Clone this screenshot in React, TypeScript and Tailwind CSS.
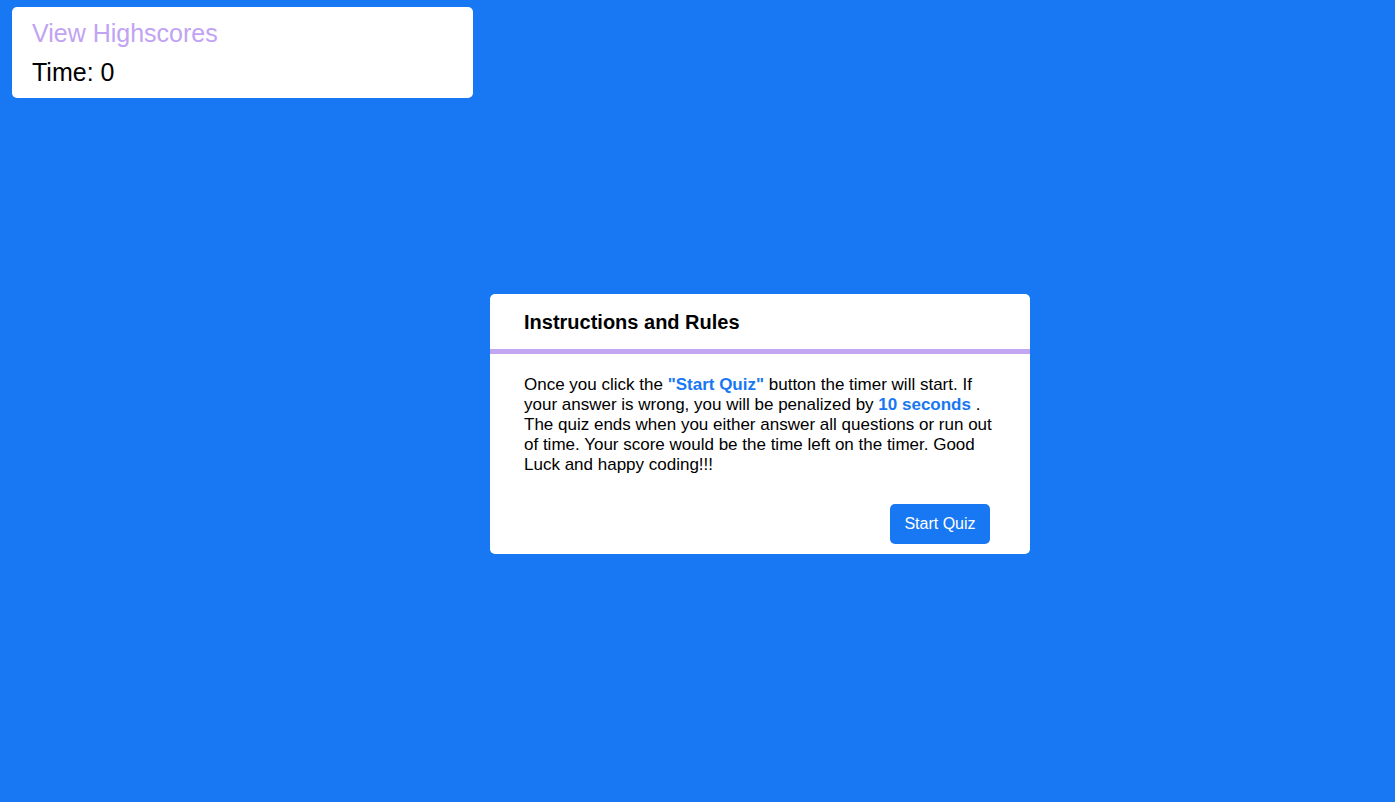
export default function App() {
  return (
    <div className="min-h-[802px] bg-[#1877f2] pt-[7px] font-['Liberation_Sans',Arial,sans-serif]">
      {/* top bar: highscores link + timer */}
      <div className="ml-3 w-[461px] rounded-[5px] bg-white pt-[7px] pb-[6px] pl-5">
        <a href="#" className="block text-[25px] leading-[38px] text-[#c0a3f3]">
          View Highscores
        </a>
        <p className="text-[25px] leading-[40px] text-black">Time: 0</p>
      </div>

      <div className="ml-[490px] mt-[196px] w-[540px] overflow-hidden rounded-[5px] bg-white">
        <div className="flex h-[60px] items-center border-b-[5px] border-[#c3a6f2] px-[34px]">
          <h2 className="text-[20px] font-bold text-black">Instructions and Rules</h2>
        </div>
        <div className="px-[34px] pt-[21px] pb-[10px]">
          <p className="text-[17px] leading-[20px] text-black">
            Once you click the <b className="text-[#1877f2]">"Start Quiz"</b> button the timer will
            start. If your answer is wrong, you will be penalized by{" "}
            <b className="text-[#1877f2]">10 seconds</b> . The quiz ends when you either answer all
            questions or run out of time. Your score would be the time left on the timer. Good Luck
            and happy coding!!!
          </p>
          <div className="mt-[29px] flex justify-end pr-[6px]">
            <button className="h-10 w-[100px] rounded-[5px] bg-[#1877f2] text-[16px] text-white">
              Start Quiz
            </button>
          </div>
        </div>
      </div>
    </div>
  );
}
